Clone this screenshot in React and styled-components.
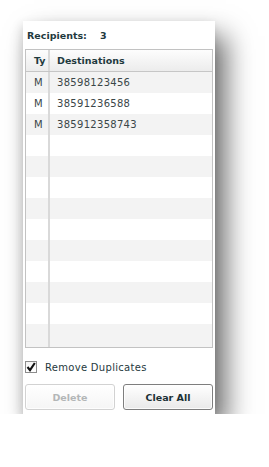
import React from 'react';
import styled, { createGlobalStyle } from 'styled-components';

const GlobalStyle = createGlobalStyle`
  body {
    margin: 0;
    background: #fff;
    font-family: "DejaVu Sans", Verdana, sans-serif;
  }
`;

const Panel = styled.div`
  margin: 21px 0 0 23px;
  width: 192px;
  height: 393px;
  box-sizing: border-box;
  padding: 0 2px;
  background: #fff;
  box-shadow: 11px 15px 26px rgba(0, 0, 0, 0.58), -2px 4px 10px rgba(0, 0, 0, 0.12);
  display: flex;
  flex-direction: column;
`;

const Summary = styled.div`
  height: 28px;
  display: flex;
  align-items: center;
  padding-left: 2px;
  font-size: 9.5px;
  font-weight: bold;
  color: #1f3a3e;
`;

const Count = styled.span`
  margin-left: 13px;
`;

const Table = styled.div`
  height: 299px;
  box-sizing: border-box;
  border: 1px solid #c2c2c2;
  box-shadow: inset 0 0 0 1px #f6f6f6;
  display: flex;
  flex-direction: column;
`;

const Row = styled.div`
  display: grid;
  grid-template-columns: 24px 1fr;
  height: 21px;
  flex: ${p => (p.$last ? '1' : '0 0 auto')};
  background: ${p => (p.$head ? 'linear-gradient(#fdfdfd, #ececec)' : p.$shade ? '#f3f3f3' : '#fff')};
  border-bottom: ${p => (p.$head ? '1px solid #c6c6c6' : 'none')};
  font-size: ${p => (p.$head ? '9.5px' : '10px')};
  font-weight: ${p => (p.$head ? 'bold' : 'normal')};
  color: ${p => (p.$head ? '#1f3a3e' : '#3a4648')};
`;

const Cell = styled.div`
  display: flex;
  align-items: center;
  padding-left: ${p => (p.$type ? '8px' : '7px')};
  border-right: ${p => (p.$type ? '2px solid #d9d9d9' : 'none')};
  letter-spacing: ${p => (p.$num ? '0.3px' : '0')};
  white-space: nowrap;
`;

const CheckRow = styled.label`
  display: flex;
  align-items: center;
  margin-top: 13px;
  height: 12px;
  font-size: 10px;
  letter-spacing: 0.3px;
  color: #1f3a3e;
`;

const Box = styled.span`
  width: 12px;
  height: 12px;
  box-sizing: border-box;
  border: 1px solid #8c8c8c;
  background: linear-gradient(#f4f4f4, #fff);
  display: flex;
  align-items: center;
  justify-content: center;
  margin-right: 8px;
`;

const Buttons = styled.div`
  display: flex;
  gap: 8px;
  margin-top: 11px;
`;

const Button = styled.button`
  width: 90px;
  height: 26px;
  padding: 0;
  border-radius: 3px;
  font-family: "DejaVu Sans", Verdana, sans-serif;
  font-size: 9.5px;
  font-weight: bold;
  border: 1px solid ${p => (p.disabled ? '#d2d2d2' : '#7e7e7e')};
  color: ${p => (p.disabled ? '#b3b6b7' : '#1b3035')};
  background: ${p => (p.disabled ? 'linear-gradient(#fff, #f5f5f5)' : 'linear-gradient(#fff, #e9e9e9)')};
  box-shadow: inset 0 0 0 1px rgba(255, 255, 255, 0.8);
`;

const rows = [
  { type: 'M', dest: '38598123456' },
  { type: 'M', dest: '38591236588' },
  { type: 'M', dest: '385912358743' },
];

const App = () => {
  const filled = [...rows];
  while (filled.length < 13) filled.push({ type: '', dest: '' });

  return (
    <>
      <GlobalStyle />
      <Panel>
        <Summary>
          Recipients:<Count>3</Count>
        </Summary>
        <Table>
          <Row $head>
            <Cell $type>Ty</Cell>
            <Cell>Destinations</Cell>
          </Row>
          {filled.map((r, i) => (
            <Row key={i} $shade={i % 2 === 0} $last={i === filled.length - 1}>
              <Cell $type>{r.type}</Cell>
              <Cell $num>{r.dest}</Cell>
            </Row>
          ))}
        </Table>
        <CheckRow>
          <Box>
            <svg width="10" height="10" viewBox="0 0 10 10">
              <path d="M1.5 5 L4 8.2 L8.8 1" fill="none" stroke="#111" strokeWidth="2.1" />
            </svg>
          </Box>
          Remove Duplicates
        </CheckRow>
        <Buttons>
          <Button disabled>Delete</Button>
          <Button>Clear All</Button>
        </Buttons>
      </Panel>
    </>
  );
};

export default App;
